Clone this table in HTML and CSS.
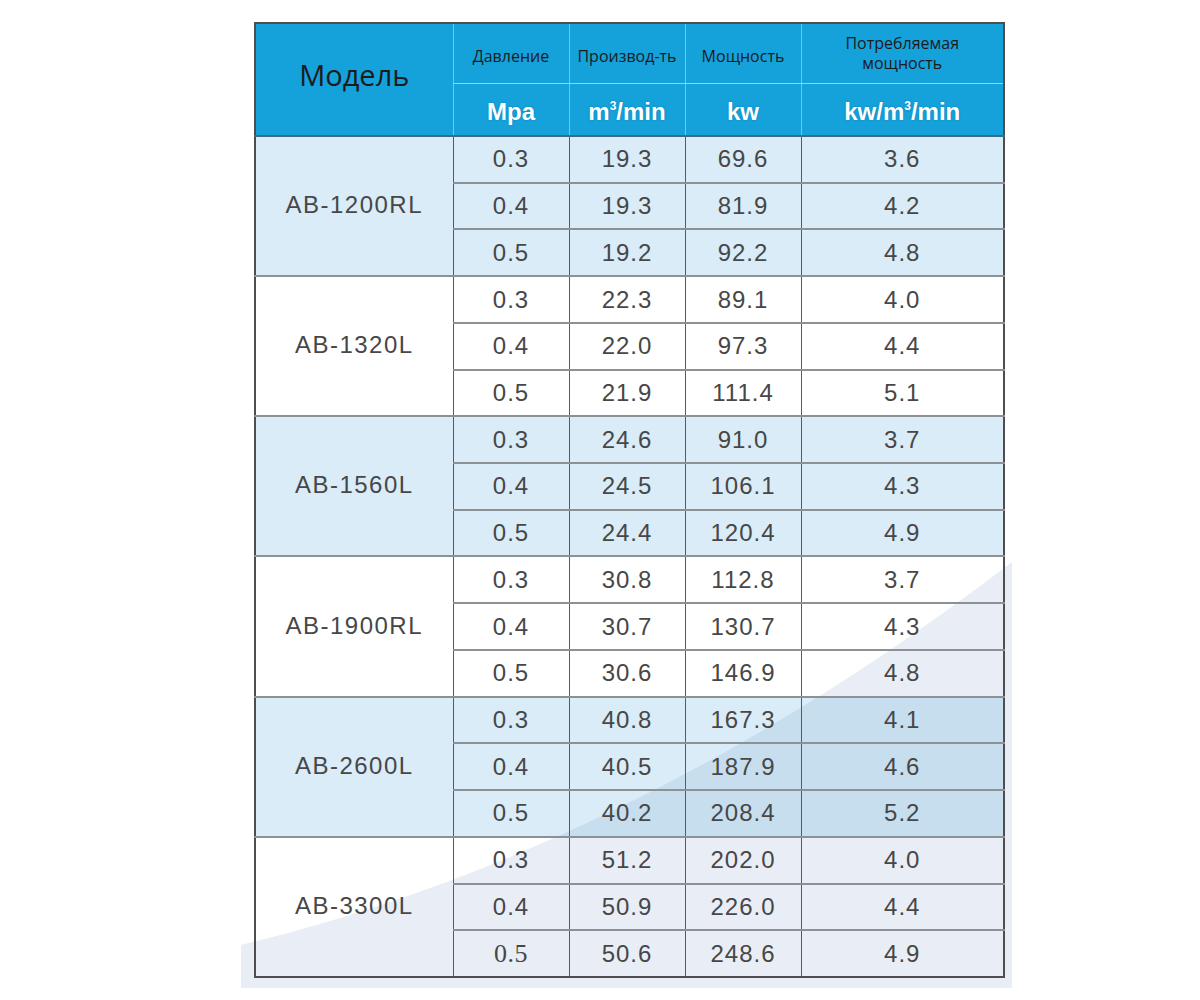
FILE: index.html
```html
<!DOCTYPE html>
<html lang="ru">
<head>
<meta charset="utf-8">
<title>Модели</title>
<link rel="stylesheet" href="styles.css">
</head>
<body>
<div class="wrap">
  <svg class="swoosh" viewBox="0 0 771 988" preserveAspectRatio="none" aria-hidden="true">
    <path d="M0 945 Q 395 850 771 562 L 771 988 L 0 988 Z" fill="#e9eef6"/>
  </svg>
  <table class="spec">
    <colgroup>
      <col class="c-model"><col class="c-num"><col class="c-num"><col class="c-num"><col class="c-last">
    </colgroup>
    <thead>
      <tr class="h1">
        <th rowspan="2" class="model-h">Модель</th>
        <th>Давление</th>
        <th>Производ-ть</th>
        <th>Мощность</th>
        <th class="two">Потребляемая<br>мощность</th>
      </tr>
      <tr class="h2">
        <th>Mpa</th>
        <th>m<sup>3</sup>/min</th>
        <th>kw</th>
        <th>kw/m<sup>3</sup>/min</th>
      </tr>
    </thead>
    <tbody class="blue">
      <tr><td rowspan="3" class="model">AB-1200RL</td><td>0.3</td><td>19.3</td><td>69.6</td><td>3.6</td></tr>
      <tr><td>0.4</td><td>19.3</td><td>81.9</td><td>4.2</td></tr>
      <tr><td>0.5</td><td>19.2</td><td>92.2</td><td>4.8</td></tr>
    </tbody>
    <tbody class="white">
      <tr><td rowspan="3" class="model">AB-1320L</td><td>0.3</td><td>22.3</td><td>89.1</td><td>4.0</td></tr>
      <tr><td>0.4</td><td>22.0</td><td>97.3</td><td>4.4</td></tr>
      <tr><td>0.5</td><td>21.9</td><td>111.4</td><td>5.1</td></tr>
    </tbody>
    <tbody class="blue">
      <tr><td rowspan="3" class="model">AB-1560L</td><td>0.3</td><td>24.6</td><td>91.0</td><td>3.7</td></tr>
      <tr><td>0.4</td><td>24.5</td><td>106.1</td><td>4.3</td></tr>
      <tr><td>0.5</td><td>24.4</td><td>120.4</td><td>4.9</td></tr>
    </tbody>
    <tbody class="white">
      <tr><td rowspan="3" class="model">AB-1900RL</td><td>0.3</td><td>30.8</td><td>112.8</td><td>3.7</td></tr>
      <tr><td>0.4</td><td>30.7</td><td>130.7</td><td>4.3</td></tr>
      <tr><td>0.5</td><td>30.6</td><td>146.9</td><td>4.8</td></tr>
    </tbody>
    <tbody class="blue">
      <tr><td rowspan="3" class="model">AB-2600L</td><td>0.3</td><td>40.8</td><td>167.3</td><td>4.1</td></tr>
      <tr><td>0.4</td><td>40.5</td><td>187.9</td><td>4.6</td></tr>
      <tr><td>0.5</td><td>40.2</td><td>208.4</td><td>5.2</td></tr>
    </tbody>
    <tbody class="white">
      <tr><td rowspan="3" class="model">AB-3300L</td><td>0.3</td><td>51.2</td><td>202.0</td><td>4.0</td></tr>
      <tr><td>0.4</td><td>50.9</td><td>226.0</td><td>4.4</td></tr>
      <tr><td class="serif">0.5</td><td>50.6</td><td>248.6</td><td>4.9</td></tr>
    </tbody>
  </table>
</div>
</body>
</html>
```

FILE: styles.css
```css
html, body {
  margin: 0;
  padding: 0;
  background: #ffffff;
}

.wrap {
  position: relative;
  width: 771px;
  height: 988px;
  margin-left: 241px;
  padding: 22px 9px 11px 13px;
  box-sizing: border-box;
}

.swoosh {
  position: absolute;
  left: 0;
  top: 0;
  width: 771px;
  height: 988px;
  z-index: 0;
}

.spec {
  position: relative;
  z-index: 1;
  width: 749px;
  table-layout: fixed;
  border-collapse: collapse;
  border: 2px solid #4e4e4e;
  font-family: "Liberation Sans", Arial, sans-serif;
  color: #474747;
}

.c-model { width: 198px; }
.c-num { width: 116px; }
.c-last { width: 203px; }

.spec th {
  background: #15a1da;
  padding: 0;
  text-align: center;
  border-left: 1px solid #6ec6ea;
}

.spec th.model-h {
  border-left: none;
  font-family: "Open Sans", "Noto Sans", sans-serif;
  font-weight: 400;
  font-size: 29px;
  color: #1c1c1c;
  padding-bottom: 14px;
  border-bottom: 2px solid #3d6b84;
}

.h1 th {
  height: 55px;
  padding-top: 4px;
  font-family: "Open Sans", "Noto Sans", sans-serif;
  font-weight: 400;
  font-size: 16px;
  line-height: 20px;
  color: #1c1c1c;
  border-bottom: 1px solid #8fd3ef;
}

.h1 th.two {
  height: 57px;
  padding-top: 0;
  padding-bottom: 2px;
}

.h2 th {
  height: 47px;
  padding-top: 4px;
  font-family: "Liberation Sans", Arial, sans-serif;
  font-weight: 700;
  font-size: 24px;
  color: #ffffff;
  text-shadow: 0 0 2px rgba(0, 90, 140, 0.45);
  border-bottom: 2px solid #3d6b84;
}

.h2 sup {
  font-size: 12px;
  vertical-align: 10px;
  line-height: 0;
}

.spec td {
  height: 44.72px;
  padding: 0;
  text-align: center;
  font-size: 24px;
  letter-spacing: 1px;
  border-left: 1px solid #5a5a5a;
  border-top: 2px solid #8c9196;
}

.spec td.model {
  border-left: none;
  letter-spacing: 1.5px;
  padding-bottom: 2px;
}

.spec td.serif {
  font-family: "Liberation Serif", "Times New Roman", serif;
  font-size: 26px;
  letter-spacing: 0.5px;
}

.blue td {
  background: rgba(65, 160, 215, 0.2);
}

.white td {
  background: transparent;
}
```
